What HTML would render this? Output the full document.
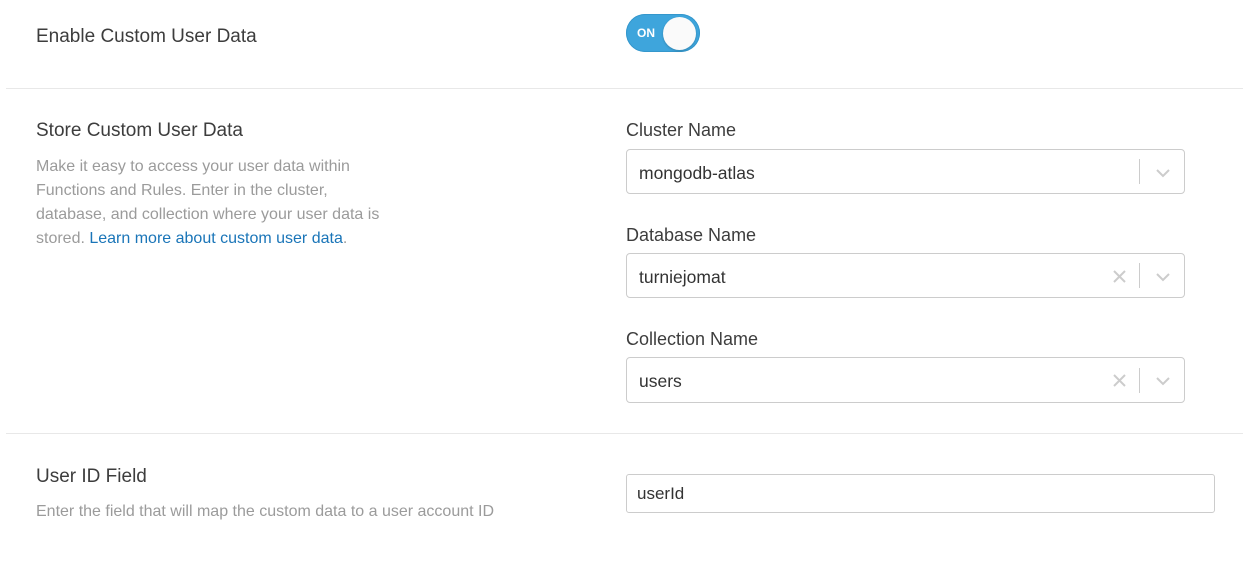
<!DOCTYPE html>
<html><head><style>
body{margin:0;width:1243px;height:563px;background:#fff;font-family:"Liberation Sans",sans-serif;position:relative;overflow:hidden}
.a{position:absolute}
.h{font-size:19px;color:#3d3d3d;left:36px}
.lbl{font-size:18px;color:#3d3d3d;left:626px}
.d{font-size:16px;color:#9b9b9b;line-height:24px;left:36px}
.sel{left:626px;width:559px;height:45px;border:1px solid #ccc;border-radius:4px;box-sizing:border-box}
.sel span{position:absolute;left:12px;top:13px;font-size:17.5px;color:#333}
.sep{position:absolute;left:512px;top:9px;width:1px;height:25px;background:#ccc}
.hr{left:6px;right:0;height:1px;background:#e8e8e8}
</style></head><body>
<div class="a h" style="top:26px">Enable Custom User Data</div>
<div class="a" style="left:626px;top:14px;width:74px;height:38px;border-radius:19px;background:#3ea5dc;box-shadow:inset 0 0 0 1px #3597cc"></div>
<div class="a" style="left:637px;top:26px;color:#fff;font-size:12px;font-weight:bold">ON</div>
<div class="a" style="left:663px;top:17px;width:33px;height:33px;border-radius:50%;background:#fafafa;box-shadow:0 1px 2px rgba(0,0,0,.2)"></div>
<div class="a hr" style="top:88px"></div>
<div class="a h" style="top:120px">Store Custom User Data</div>
<div class="a d" style="top:155px">Make it easy to access your user data within<br>Functions and Rules. Enter in the cluster,<br>database, and collection where your user data is<br>stored. <span style="color:#1a75b8">Learn more about custom user data</span>.</div>
<div class="a lbl" style="top:120px">Cluster Name</div>
<div class="a sel" style="top:149px"><span>mongodb-atlas</span><div class="sep"></div>
<svg class="a" style="left:529px;top:18px" width="14" height="10"><path d="M1 2l6 6 6-6" stroke="#ccc" stroke-width="2" fill="none"/></svg></div>
<div class="a lbl" style="top:225px">Database Name</div>
<div class="a sel" style="top:253px"><span>turniejomat</span><svg class="a" style="left:486px;top:16px" width="13" height="13"><path d="M1 1l11 11M12 1L1 12" stroke="#ccc" stroke-width="2"/></svg><div class="sep"></div>
<svg class="a" style="left:529px;top:18px" width="14" height="10"><path d="M1 2l6 6 6-6" stroke="#ccc" stroke-width="2" fill="none"/></svg></div>
<div class="a lbl" style="top:329px">Collection Name</div>
<div class="a sel" style="top:357px;height:46px"><span>users</span><svg class="a" style="left:486px;top:16px" width="13" height="13"><path d="M1 1l11 11M12 1L1 12" stroke="#ccc" stroke-width="2"/></svg><div class="sep" style="top:10px"></div>
<svg class="a" style="left:529px;top:18px" width="14" height="10"><path d="M1 2l6 6 6-6" stroke="#ccc" stroke-width="2" fill="none"/></svg></div>
<div class="a hr" style="top:433px"></div>
<div class="a h" style="top:466px">User ID Field</div>
<div class="a d" style="top:500px">Enter the field that will map the custom data to a user account ID</div>
<div class="a" style="left:626px;top:474px;width:589px;height:39px;border:1px solid #ccc;border-radius:3px;box-sizing:border-box"><span style="position:absolute;left:10px;top:9px;font-size:17px;color:#333">userId</span></div>
</body></html>
